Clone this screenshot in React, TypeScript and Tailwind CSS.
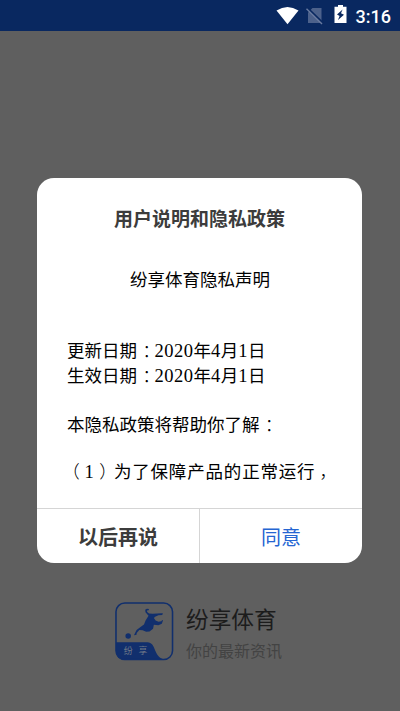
import type { ReactNode } from "react";

function StatusBar() {
  return (
    <header className="flex h-[31px] shrink-0 items-start justify-end bg-[#092860] pr-[9px] text-white">
      <svg className="mt-[7px] h-[18px] w-[24px]" viewBox="0 0 24 18" fill="currentColor">
        <path d="M.5 3.6Q6 0 11.5 0t11 3.6L11.5 17.2Z" />
      </svg>
      <svg className="ml-[6px] mt-[7px] h-[18px] w-[18px]" viewBox="0 0 18 18">
        <path d="M6.5 1H15.5V16H2V5.5Z" fill="#4c618b" />
        <path d="M1.5 1 17 16" stroke="#092860" strokeWidth="1.8" />
        <path d="M.5 1.8 16 17" stroke="#6a7ba0" strokeWidth="1.4" />
      </svg>
      <svg className="ml-[10px] mt-[5px] h-[19px] w-[13px]" viewBox="0 0 13 19">
        <path d="M4 0h5v1.7h3.5v16.3H.5V1.7H4Z" fill="white" />
        <path d="M8.6 4.5 3 9.5 5.6 11 4 15l6-5.3L7 8.3Z" fill="#092860" />
      </svg>
      <span className="ml-[9px] mt-[5px] font-['Roboto',sans-serif] text-[18px] font-medium leading-[23px]">
        3:16
      </span>
    </header>
  );
}

function Logo() {
  return (
    <svg className="h-[59px] w-[59px]" viewBox="0 0 60 60">
      <path d="M1 41H33C42 41 39 56 50 58.5H10Q1 58.5 1 50Z" fill="#112f6d" />
      <rect x="1" y="1" width="57.5" height="57.5" rx="9" fill="none" stroke="#112f6d" strokeWidth="1.6" />
      <g fill="#112f6d">
        <circle cx="13.4" cy="34.6" r="2.8" />
        <path d="M31 10.5 30.7 8l1.8-1.2 2 .4-.2 1.1-1.8.4.2 1.4 2 1.6 3.6.3 9-.5 1.6.3-1 1.3-3.8.4-3.8 1.8-.6 1.2 1.6 2.4 3 1.1 2.8-.5.9-1.2.8.5-1.2 3.3-3.5 1.6-4.6-.5-.8 4-3.6 2.8-3.4.2-3.6-1.4-3.4-.4-2.6 3-.2 2-2.6.4 2.6-5.4 4.4-3.2 3.2-2.2 1.6-4.2 3-4.8Z" />
      </g>
      <text
        x="9"
        y="53.2"
        fontSize="9"
        letterSpacing="6"
        fill="#707987"
        className="font-['Noto_Sans_CJK_SC',sans-serif]"
      >
        纷享
      </text>
    </svg>
  );
}

function Digits({ children }: { children: ReactNode }) {
  return (
    <span className="font-['Liberation_Serif',serif] text-[18.5px] leading-none tracking-[0.5px]">
      {children}
    </span>
  );
}

function Colon() {
  return (
    <span className="relative left-px top-px font-['Noto_Sans_CJK_TC',sans-serif] font-light">
      ：
    </span>
  );
}

function DateLine({ label }: { label: string }) {
  return (
    <p className="h-[25px] whitespace-nowrap">
      {label}
      <Colon />
      <Digits>2020</Digits>年<Digits>4</Digits>月<Digits>1</Digits>日
    </p>
  );
}

function PolicyDialog() {
  return (
    <section
      role="dialog"
      className="ml-[37px] mt-[147px] flex h-[385px] w-[325px] shrink-0 flex-col overflow-hidden rounded-[17px] bg-white"
    >
      <h1 className="pt-[26px] text-center text-[19px] font-bold leading-[28px] text-[#3c3c3c]">
        用户说明和隐私政策
      </h1>
      <div className="flex-1 overflow-hidden pl-[30px] text-[17.5px] font-normal leading-[25px] text-black">
        <h2 className="mt-[34px] pr-[29px] text-center font-normal">纷享体育隐私声明</h2>
        <div className="mt-[46px]">
          <DateLine label="更新日期" />
          <DateLine label="生效日期" />
        </div>
        <p className="mt-[24px] h-[25px] whitespace-nowrap">
          本隐私政策将帮助你了解
          <Colon />
        </p>
        <p className="mt-[22px] h-[25px] whitespace-nowrap tracking-[0.82px]">
          <span className="ml-[4px] mr-[4px] font-light [font-feature-settings:'halt']">（</span>
          <Digits>1</Digits>
          <span className="ml-[5px] mr-[5px] font-light [font-feature-settings:'halt']">）</span>
          为了保障产品的正常运行
          <span className="relative left-[4px] font-light">，</span>
        </p>
      </div>
      <footer className="grid h-[55px] shrink-0 grid-cols-[163px_162px] border-t border-[#d5d5d5] text-[20px] leading-[56px]">
        <button type="button" className="border-r border-[#d5d5d5] font-bold text-[#3c3c3c]">
          以后再说
        </button>
        <button type="button" className="font-normal text-[#2565d2]">
          同意
        </button>
      </footer>
    </section>
  );
}

export default function App() {
  return (
    <main className="flex h-[711px] w-[400px] flex-col overflow-hidden bg-[#5f5f5f] font-['Noto_Sans_CJK_SC',sans-serif]">
      <StatusBar />
      <PolicyDialog />
      <div className="ml-[115px] mt-[39px] flex">
        <Logo />
        <div className="ml-[12px] whitespace-nowrap">
          <p className="text-[22.7px] leading-[34px] text-[#1c1c1c]">纷享体育</p>
          <p className="mt-[2px] text-[16px] leading-[24px] text-[#434343]">你的最新资讯</p>
        </div>
      </div>
    </main>
  );
}
